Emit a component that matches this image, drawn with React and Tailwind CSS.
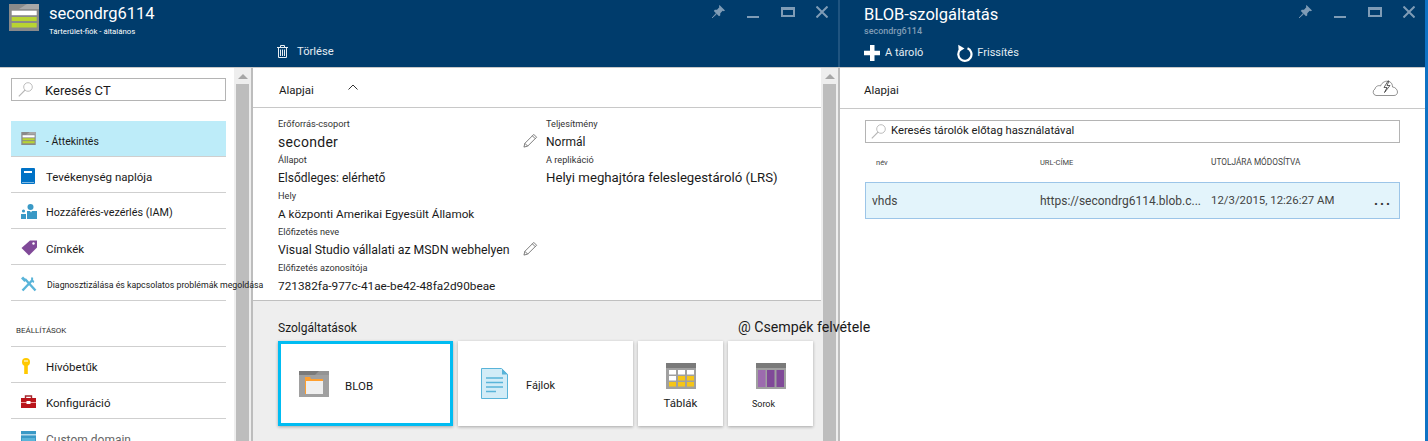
const font = "font-['Roboto','Open_Sans',sans-serif]";

function StorageIcon({ className }) {
  return (
    <svg viewBox="0 0 30 27" className={className}>
      <rect width="30" height="27" fill="#8a8a8a" />
      <path d="M18 0h12v5H10z" fill="#a8a8a8" />
      <rect x="2.700" y="6.700" width="25" height="4.500" fill="#fff" />
      <rect x="2.700" y="13" width="25" height="4" fill="#b8d432" />
      <rect x="2.700" y="19" width="25" height="4.500" fill="#b8d432" />
    </svg>
  );
}

function BookIcon() {
  return (
    <svg viewBox="0 0 14 16" className="w-[14px] h-[16px]">
      <rect width="14" height="16" rx="1" fill="#0072c6" />
      <rect x="3" y="3" width="8" height="2" fill="#fff" />
      <rect x="1" y="14" width="12" height="1" fill="#7fb9e3" />
    </svg>
  );
}

function PeopleIcon() {
  return (
    <svg viewBox="0 0 16 15" className="w-[16px] h-[15px]">
      <circle cx="9.500" cy="3" r="3" fill="#3999c6" />
      <path d="M6 15V7h3l1 1.500L11 7h5v8z" fill="#3999c6" />
      <circle cx="2.500" cy="7" r="1.600" fill="#3999c6" />
      <path d="M0 15v-5h5v5z" fill="#3999c6" />
    </svg>
  );
}

function TagIcon() {
  return (
    <svg viewBox="0 0 16 16" className="w-[16px] h-[16px]">
      <path d="M9 0.500h7v7L8 15.500 0.500 8z" fill="#804998" />
      <circle cx="12.500" cy="3.500" r="1.200" fill="#fff" />
    </svg>
  );
}

function ToolsIcon() {
  return (
    <svg viewBox="0 0 16 16" className="w-[16px] h-[16px]" fill="none" stroke="#59b4d9" strokeWidth="2.400">
      <path d="M1.500 14.500 11 4.500" />
      <path d="M14.500 14.500 4 3" />
      <path d="M1 1.500 4.500 5" strokeWidth="3" />
      <path d="M11.500 1.500A3 3 0 0 0 13 6" strokeWidth="2" />
    </svg>
  );
}

function KeyIcon() {
  return (
    <svg viewBox="0 0 10 16" className="w-[10px] h-[16px]">
      <circle cx="5" cy="4" r="4" fill="#ffc900" />
      <rect x="3.200" y="6" width="3.600" height="10" fill="#ffc900" />
      <rect x="3" y="2.500" width="4" height="1" fill="#fff" />
    </svg>
  );
}

function CaseIcon() {
  return (
    <svg viewBox="0 0 15 13" className="w-[15px] h-[13px]">
      <path d="M4.500 3V1h6v2" fill="none" stroke="#a4262c" strokeWidth="1.400" />
      <rect y="3" width="15" height="10" fill="#ba141a" />
      <rect y="7" width="15" height="1" fill="#f3a0a0" />
      <rect x="5.500" y="6" width="4" height="3" fill="#fff" />
    </svg>
  );
}

function DomainIcon() {
  return (
    <svg viewBox="0 0 15 13" className="w-[15px] h-[13px]">
      <rect width="15" height="13" fill="#3999c6" />
      <rect x="0" y="3" width="15" height="1.500" fill="#b3d9ec" />
      <rect x="1" y="7" width="13" height="4" fill="#59b4d9" />
    </svg>
  );
}

function BlobIcon() {
  return (
    <svg viewBox="0 0 30 26" className="w-[30px] h-[26px]">
      <rect width="30" height="26" fill="#a0a0a0" />
      <rect width="30" height="4" fill="#7a7a7a" />
      <path d="M20 0h10v4H16z" fill="#949494" />
      <path d="M6 6h5l1 2h12v15H6z" fill="#ff9f2e" />
      <rect x="7" y="10" width="17" height="13" fill="#efefef" />
    </svg>
  );
}

function FileIcon() {
  return (
    <svg viewBox="0 0 27 31" className="w-[27px] h-[31px]">
      <path d="M0.500 0.500h20l6 6v24h-26z" fill="#d2ecf7" stroke="#59b4d9" />
      <path d="M21 0.500v6h6z" fill="#59b4d9" />
      <path d="M5 10h17M5 14.500h17M5 19h17M5 23.500h10" stroke="#59b4d9" strokeWidth="1.400" />
    </svg>
  );
}

function TableIcon() {
  const whites = [[3, 7], [12, 7], [21, 7], [3, 13]];
  const yellows = [[12, 13], [21, 13], [3, 19], [12, 19], [21, 19]];
  return (
    <svg viewBox="0 0 30 26" className="w-[30px] h-[26px]">
      <rect width="30" height="26" fill="#a0a0a0" />
      <rect width="30" height="5" fill="#7a7a7a" />
      {whites.map(([x, y]) => (
        <rect key={`w${x}${y}`} x={x} y={y} width="7" height="4.500" fill="#fff" />
      ))}
      {yellows.map(([x, y]) => (
        <rect key={`y${x}${y}`} x={x} y={y} width="7" height="4.500" fill="#f5c518" />
      ))}
    </svg>
  );
}

function QueueIcon() {
  return (
    <svg viewBox="0 0 30 26" className="w-[30px] h-[26px]">
      <rect width="30" height="26" fill="#a0a0a0" />
      <rect width="30" height="5" fill="#7a7a7a" />
      <rect x="2" y="7" width="7.500" height="17" fill="#9c6bae" />
      <rect x="11" y="7" width="7.500" height="17" fill="#804998" />
      <rect x="20.500" y="7" width="7.500" height="17" fill="#804998" />
    </svg>
  );
}

function CloudIcon() {
  return (
    <svg viewBox="0 0 26 16" className="w-[26px] h-[16px]" fill="none" stroke="#666" strokeWidth="0.700">
      <path d="M9 15.500H4A3.500 3.500 0 0 1 3 9C3.500 6 7 5 8.500 6C10 2 14 0.500 17 1.500C20 2.500 20.500 5 20.500 7C23 7 25.500 9.500 25.500 12C25.500 14 24 15.500 22 15.500H9" />
      <path d="M16 1 12 7.500h3l-2.500 5 5.500-7h-3l2-4.500z" fill="#fff" stroke="#222" />
    </svg>
  );
}

function SearchGlass() {
  return (
    <svg viewBox="0 0 15 15" className="w-[15px] h-[15px] shrink-0" fill="none" stroke="#b5b5b5" strokeWidth="0.900">
      <circle cx="10" cy="5" r="4.300" />
      <path d="M7 8.200 0.800 14.400" strokeWidth="1.200" />
    </svg>
  );
}

function PencilGlyph({ className }) {
  return (
    <svg viewBox="0 0 16 16" className={`w-[15px] h-[15px] ${className}`} fill="none" stroke="#666" strokeWidth="0.900">
      <path d="M11.500 1.500 14.500 4.500 5 14 1 15 2 11z" />
      <path d="M2 11 5 14M10 3 13 6" />
    </svg>
  );
}

function TrashGlyph() {
  return (
    <svg viewBox="0 0 11 13" className="w-[11px] h-[13px] shrink-0" fill="none" stroke="#e8eef3">
      <path d="M0 2.500h11M3.500 2.500V0.500h4v2" />
      <path d="M1.500 2.500v10h8v-10" />
      <path d="M3.500 4.500v6.500M5.500 4.500v6.500M7.500 4.500v6.500" />
    </svg>
  );
}

function PlusGlyph() {
  return (
    <svg viewBox="0 0 16 16" className="w-[16px] h-[16px] shrink-0" fill="#fff">
      <path d="M6 0h4.500v5.700H16v4.500h-5.500V16H6v-5.800H0V5.700h6z" />
    </svg>
  );
}

function RefreshGlyph() {
  return (
    <svg viewBox="0 0 16 18" className="w-[16px] h-[18px] shrink-0">
      <path d="M10.500 4.200A6.600 6.600 0 1 1 3.300 5.500" fill="none" stroke="#fff" strokeWidth="2.200" />
      <path d="M1.200 0.800 7.500 4.600 1.800 8z" fill="#fff" />
    </svg>
  );
}

function WindowButtons() {
  return (
    <div className="flex items-start">
      <svg viewBox="0 0 13 13" className="w-[13px] h-[13px] mt-[5px] shrink-0" fill="#7f9cb6">
        <path d="M7.500 0 13 5.500 11.800 6.200 10.700 5.800 8.300 8.200 8.200 10.500 7 11.200 1.800 6 2.800 4.800 5 4.700 7.300 2.300 7 1z" />
        <path d="M4 8.500 0 13 4.500 9z" stroke="#7f9cb6" strokeWidth="0.700" />
      </svg>
      <div className="w-[12px] h-[2px] bg-[#7f9cb6] ml-[22px] mt-[16px] shrink-0" />
      <div className="w-[14px] h-[10px] border-2 border-t-[3px] border-[#7f9cb6] ml-[22px] mt-[7px] shrink-0" />
      <svg viewBox="0 0 12 12" className="w-[12px] h-[12px] ml-[21px] mt-[6px] shrink-0" stroke="#7f9cb6" strokeWidth="2">
        <path d="M0.500 0.500 11.500 11.500M11.500 0.500 0.500 11.500" />
      </svg>
    </div>
  );
}

function ScrollBar() {
  return (
    <div className="w-[17px] bg-[#eeeeee] flex flex-col items-center shrink-0">
      <div className="h-[16px] flex items-center justify-center shrink-0">
        <div className="w-0 h-0 border-x-[5px] border-x-transparent border-b-[5px] border-b-[#a6a6a6]" />
      </div>
      <div className="w-[13px] flex-1 bg-[#bdbdbd]" />
    </div>
  );
}

const menuTop = [
  { icon: <BookIcon />, label: "Tevékenység naplója", size: "text-[11.500px]" },
  { icon: <PeopleIcon />, label: "Hozzáférés-vezérlés (IAM)", size: "text-[10.800px]" },
  { icon: <TagIcon />, label: "Címkék", size: "text-[11.500px]" },
];

function MenuRow({ icon, label, size, muted }) {
  return (
    <div className="h-[36px] flex items-center pt-[2px] border-b border-[#cfcfcf] shrink-0 whitespace-nowrap">
      <div className="w-[35px] pl-[10px] flex justify-start shrink-0">{icon}</div>
      <span className={`${size} pt-[4px] ${muted ? "text-[#666]" : "text-[#1a1a1a]"}`}>{label}</span>
    </div>
  );
}

function Field({ label, value, edit, valueSize = "text-[12px]" }) {
  return (
    <div className="relative">
      <div className="text-[9.200px] h-[14px] leading-[13px] text-[#333]">{label}</div>
      <div className={`${valueSize} h-[22px] leading-[22px] text-[#1a1a1a] whitespace-nowrap`}>{value}</div>
      {edit ? <PencilGlyph className="absolute right-0 top-[16px]" /> : null}
    </div>
  );
}

function Tile({ icon, label, className, labelClass }) {
  return (
    <div className={`bg-white shadow-[0_1px_3px_rgba(0,0,0,0.3)] h-[85px] shrink-0 ${className}`}>
      {icon}
      <span className={labelClass}>{label}</span>
    </div>
  );
}

export default function App() {
  return (
    <div className={`${font} w-[1428px] h-[441px] overflow-hidden flex bg-white`}>
      {/* first blade */}
      <div className="w-[840px] flex flex-col shrink-0">
        <div className="h-[68px] bg-[#003c6c] border-b border-[#c8c8c8] flex shrink-0 text-white">
          <div className="pl-[9px] pt-[4px]">
            <StorageIcon className="w-[30px] h-[27px]" />
          </div>
          <div className="pl-[10px] pt-[2px] w-[238px] shrink-0">
            <div className="text-[16.500px] leading-[24px]">secondrg6114</div>
            <div className="text-[7.800px] leading-[12px]">Tárterület-fiók - általános</div>
          </div>
          <div className="flex-1 flex items-end pb-[6px]">
            <div className="flex items-center gap-[9px]">
              <TrashGlyph />
              <span className="text-[11.200px] pt-[3px] text-[#e4ecf2]">Törlése</span>
            </div>
          </div>
          <div className="pr-[10px] border-r-2 border-[#1f5480]">
            <WindowButtons />
          </div>
        </div>

        <div className="flex-1 flex min-h-0">
          {/* resource menu */}
          <div className="w-[234px] shrink-0 flex flex-col pl-[11px] pr-[8px] relative z-10">
            <div className="mt-[10px] h-[23px] border border-[#b4b4b4] flex items-center shrink-0">
              <div className="ml-[6px]">
                <SearchGlass />
              </div>
              <span className="text-[13px] ml-[12px] pt-[3px] text-[#1a1a1a]">Keresés CT</span>
            </div>
            <div className="mt-[20px] h-[36px] bg-[#bdecf9] border-b border-[#cfcfcf] flex items-center shrink-0">
              <div className="w-[35px] pl-[10px] shrink-0">
                <StorageIcon className="w-[15px] h-[13px]" />
              </div>
              <span className="text-[10.500px] pt-[7px] text-[#1a1a1a]">- Áttekintés</span>
            </div>
            {menuTop.map((item) => (
              <MenuRow key={item.label} {...item} />
            ))}
            <MenuRow icon={<ToolsIcon />} label="Diagnosztizálása és kapcsolatos problémák megoldása" size="text-[8.750px] ml-[1px]" />
            <div className="h-[46px] shrink-0 flex items-end pb-[9px] pl-[5px] text-[8px] text-[#333] border-b border-[#cfcfcf]">
              BEÁLLÍTÁSOK
            </div>
            <MenuRow icon={<KeyIcon />} label="Hívóbetűk" size="text-[11.500px]" />
            <MenuRow icon={<CaseIcon />} label="Konfiguráció" size="text-[11.500px]" />
            <MenuRow icon={<DomainIcon />} label="Custom domain" size="text-[12px]" muted />
          </div>
          <ScrollBar />
          <div className="w-[2px] bg-[#bdbdbd] shrink-0" />

          {/* overview */}
          <div className="w-[568px] shrink-0 flex flex-col">
            <div className="h-[40px] border-b border-[#c8c8c8] flex items-center pl-[26px] shrink-0">
              <span className="text-[11.500px] pt-[6px] text-[#1a1a1a]">Alapjai</span>
              <svg viewBox="0 0 10 6" className="w-[10px] h-[6px] ml-[34px] -mt-[2px]" fill="none" stroke="#333">
                <path d="M0.500 5.500 5 1 9.500 5.500" />
              </svg>
            </div>
            <div className="h-[193px] flex pl-[25px] pt-[9px] border-b border-[#c0c0c0] shrink-0">
              <div className="w-[260px] shrink-0">
                <Field label="Erőforrás-csoport" value="seconder" valueSize="text-[14px] tracking-[0.3px]" edit />
                <Field label="Állapot" value="Elsődleges: elérhető" />
                <Field label="Hely" value="A központi Amerikai Egyesült Államok" valueSize="text-[11.700px]" />
                <Field label="Előfizetés neve" value="Visual Studio vállalati az MSDN webhelyen" valueSize="text-[12.300px]" edit />
                <Field label="Előfizetés azonosítója" value="721382fa-977c-41ae-be42-48fa2d90beae" valueSize="text-[11.800px]" />
              </div>
              <div className="pl-[8px]">
                <Field label="Teljesítmény" value="Normál" />
                <Field label="A replikáció" value="Helyi meghajtóra feleslegestároló (LRS)" valueSize="text-[13.200px]" />
              </div>
            </div>
            <div className="flex-1 bg-[#eeeeee] pl-[25px] relative">
              <div className="text-[12px] text-[#1a1a1a] pt-[19px] leading-[16px]">Szolgáltatások</div>
              <div className="absolute left-[485px] top-[16px] text-[14.200px] text-[#1a1a1a] whitespace-nowrap z-20">@ Csempék felvétele</div>
              <div className="flex gap-[5px] mt-[5px] items-start">
                <Tile
                  className="w-[175px] border-[3px] border-[#00bcf2] flex items-center pl-[18px]"
                  icon={<BlobIcon />}
                  label="BLOB"
                  labelClass="ml-[16px] pt-[6px] text-[11.500px] text-[#1a1a1a]"
                />
                <Tile
                  className="w-[175px] flex items-center pl-[23px]"
                  icon={<FileIcon />}
                  label="Fájlok"
                  labelClass="ml-[18px] pt-[6px] text-[11px] text-[#1a1a1a]"
                />
                <Tile
                  className="w-[85px] flex flex-col items-center pt-[22px]"
                  icon={<TableIcon />}
                  label="Táblák"
                  labelClass="mt-[6px] text-[11.500px] text-[#1a1a1a]"
                />
                <Tile
                  className="w-[85px] flex flex-col items-center pt-[22px]"
                  icon={<QueueIcon />}
                  label="Sorok"
                  labelClass="mt-[9px] -ml-[14px] text-[9px] text-[#1a1a1a]"
                />
              </div>
            </div>
          </div>
          <ScrollBar />
          <div className="w-[2px] bg-[#bdbdbd] shrink-0" />
        </div>
      </div>

      {/* second blade */}
      <div className="flex-1 flex flex-col min-w-0">
        <div className="h-[68px] bg-[#003c6c] border-b border-[#c8c8c8] flex justify-between shrink-0 text-white">
          <div className="pl-[24px] pt-[4px]">
            <div className="text-[16.500px] h-[21px] leading-[22px]">BLOB-szolgáltatás</div>
            <div className="text-[9px] leading-[12px] text-[#7f9cb6] font-medium">secondrg6114</div>
            <div className="flex items-center mt-[7px] text-[11px] text-[#e4ecf2]">
              <PlusGlyph />
              <span className="ml-[5px] pt-[1px]">A tároló</span>
              <div className="ml-[34px]">
                <RefreshGlyph />
              </div>
              <span className="ml-[4px] pt-[1px]">Frissítés</span>
            </div>
          </div>
          <div className="pr-[10px]">
            <WindowButtons />
          </div>
        </div>
        <div className="h-[41px] border-b border-[#c8c8c8] flex items-center justify-between pl-[24px] pr-[27px] shrink-0">
          <span className="text-[11.500px] pt-[5px] text-[#1a1a1a]">Alapjai</span>
          <CloudIcon />
        </div>
        <div className="pl-[25px] pr-[25px]">
          <div className="mt-[11px] h-[23px] border border-[#b4b4b4] flex items-center">
            <div className="ml-[5px]">
              <SearchGlass />
            </div>
            <span className="text-[11.250px] ml-[5px] text-[#1a1a1a]">Keresés tárolók előtag használatával</span>
          </div>
          <div className="flex h-[39px] items-center text-[7.500px] text-[#444]">
            <div className="w-[175px] pl-[11px] shrink-0">név</div>
            <div className="w-[171px] shrink-0">URL-CÍME</div>
            <div className="text-[8.300px]">UTOLJÁRA MÓDOSÍTVA</div>
          </div>
          <div className="h-[37px] bg-[#e3f4fb] border border-[#9cc5e8] flex items-center text-[12px] text-[#444] whitespace-nowrap">
            <div className="w-[174px] pl-[6px] shrink-0">vhds</div>
            <div className="w-[171px] shrink-0">https://secondrg6114.blob.c...</div>
            <div className="w-[163px] shrink-0 text-[11.400px]">12/3/2015, 12:26:27 AM</div>
            <div className="text-[14px] font-bold tracking-[2px] text-[#333]">...</div>
          </div>
        </div>
      </div>
      <div className="w-[3px] bg-[#0f72c4] shrink-0" />
    </div>
  );
}
